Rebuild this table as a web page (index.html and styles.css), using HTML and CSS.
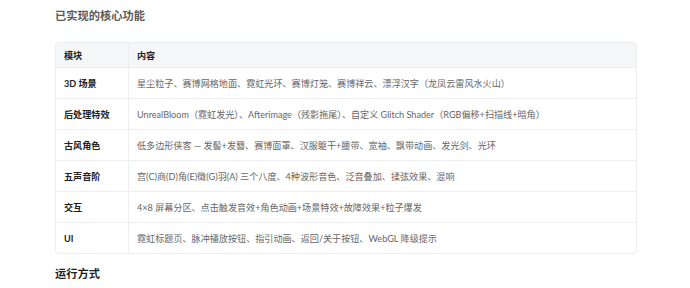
FILE: index.html
```html
<!DOCTYPE html>
<html lang="zh-CN">
<head>
<meta charset="utf-8">
<link rel="stylesheet" href="styles.css">
</head>
<body>
<div class="page">
  <h2 class="title">已实现的核心功能</h2>
  <table class="features">
    <thead>
      <tr><th class="col-mod">模块</th><th>内容</th></tr>
    </thead>
    <tbody>
      <tr><td class="mod">3D 场景</td><td>星尘粒子、赛博网格地面、霓虹光环、赛博灯笼、赛博祥云、漂浮汉字（龙凤云雷风水火山）</td></tr>
      <tr><td class="mod">后处理特效</td><td>UnrealBloom（霓虹发光）、Afterimage（残影拖尾）、自定义 Glitch Shader（RGB偏移+扫描线+暗角）</td></tr>
      <tr><td class="mod">古风角色</td><td>低多边形侠客 — 发髻+发簪、赛博面罩、汉服躯干+腰带、宽袖、飘带动画、发光剑、光环</td></tr>
      <tr><td class="mod">五声音阶</td><td>宫(C)商(D)角(E)徵(G)羽(A) 三个八度、4种波形音色、泛音叠加、揉弦效果、混响</td></tr>
      <tr><td class="mod">交互</td><td>4×8 屏幕分区、点击触发音效+角色动画+场景特效+故障效果+粒子爆发</td></tr>
      <tr><td class="mod">UI</td><td>霓虹标题页、脉冲播放按钮、指引动画、返回/关于按钮、WebGL 降级提示</td></tr>
    </tbody>
  </table>
  <h2 class="section">运行方式</h2>
  <div class="box"></div>
</div>
</body>
</html>
```

FILE: styles.css
```css
html, body {
  margin: 0;
  padding: 0;
  background: #ffffff;
}
body {
  font-family: "Lato", "Noto Sans CJK SC", sans-serif;
  color: #5f6368;
}
.page {
  width: 582px;
  padding: 7px 0 0 55px;
}
.title {
  margin: 0 0 18px;
  font-size: 11.25px;
  line-height: 17px;
  font-weight: 700;
  color: #5a5a5a;
}
.features {
  width: 582px;
  border-collapse: separate;
  border-spacing: 0;
  border: 1px solid #eceef0;
  border-radius: 4px;
  overflow: hidden;
  font-size: 9.1px;
}
.features th,
.features td {
  text-align: left;
  padding: 0 9px 0 8px;
  border-bottom: 1px solid #eceef0;
  vertical-align: middle;
  white-space: nowrap;
}
.features th {
  height: 24px;
  background: #f5f6f7;
  color: #222;
  font-weight: 700;
}
.features td {
  height: 30px;
  color: #666;
}
.features tbody tr:last-child td {
  border-bottom: none;
}
.features .col-mod,
.features .mod {
  width: 55px;
  border-right: 1px solid #eceef0;
}
.features .mod {
  color: #222;
  font-weight: 700;
}
.section {
  margin: 11px 0 0;
  font-size: 11.25px;
  line-height: 17px;
  font-weight: 700;
  color: #1f1f1f;
}
.box {
  margin: 6px 3px 0 3px;
  height: 40px;
  border: 1px solid #eeeeee;
  border-radius: 4px;
}
```
